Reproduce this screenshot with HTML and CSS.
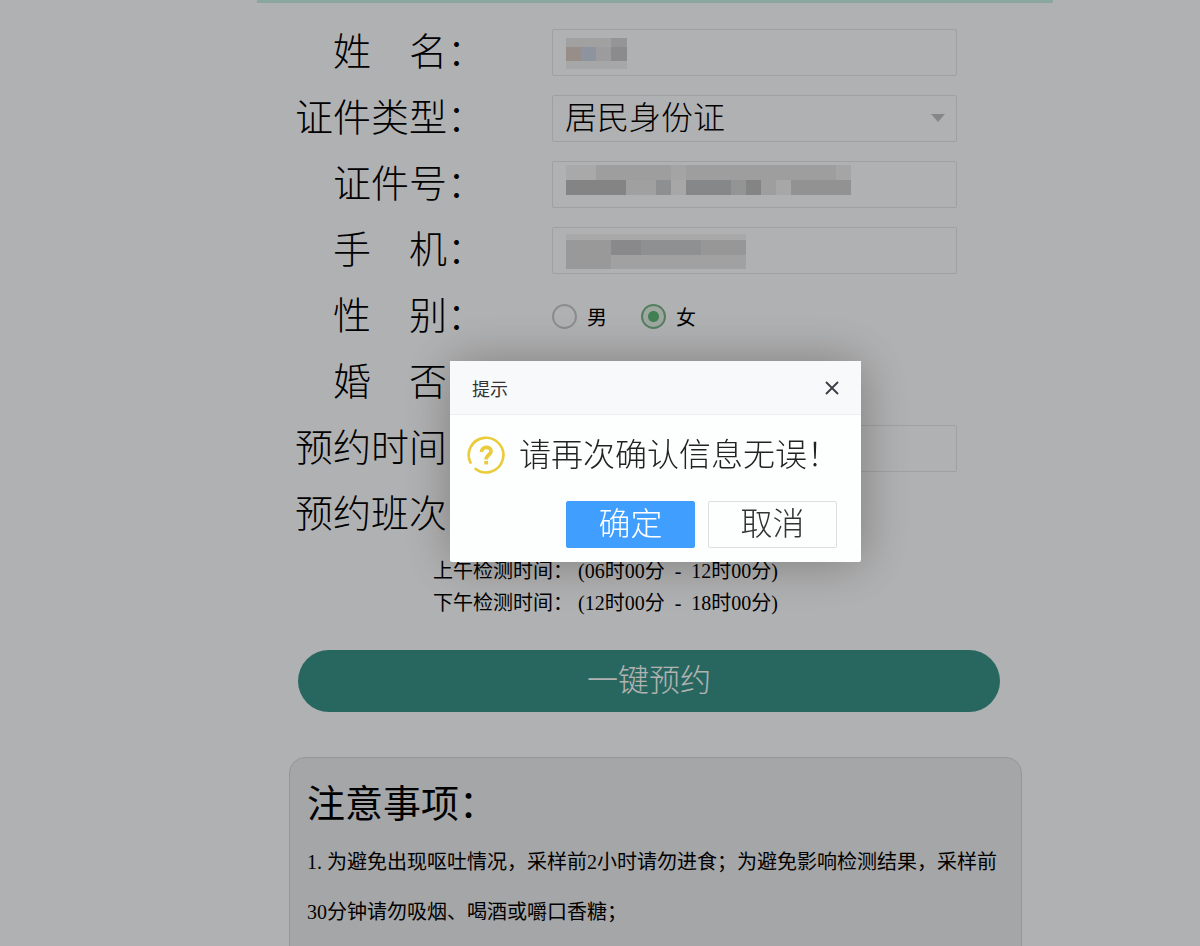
FILE: index.html
```
<!DOCTYPE html>
<html lang="zh-CN">
	<head>
		<meta charset="utf-8">
		<title>预约</title>
		<meta name="viewport" content="width=device-width,initial-scale=1" />
		<link rel="stylesheet" href="styles.css">
	</head>
	<body>
		<div class="page">
			<form class="form">
				<div class="row">
					<label class="name" for="userName">姓　名：</label>
					<input class="text mosaic-name" type="text" id="userName">
				</div>
				<div class="row">
					<label class="name" for="cardType">证件类型：</label>
					<div class="select">
						<select class="text" id="cardType">
							<option>居民身份证</option>
						</select>
					</div>
				</div>
				<div class="row">
					<label class="name" for="cardNo">证件号：</label>
					<input class="text mosaic-card" type="text" id="cardNo">
				</div>
				<div class="row">
					<label class="name" for="phone">手　机：</label>
					<input class="text mosaic-phone" type="text" id="phone">
				</div>
				<div class="row">
					<span class="name">性　别：</span>
					<div class="radios">
						<label><input type="radio" name="sex" value="1">男</label>
						<label><input type="radio" name="sex" value="2" checked>女</label>
					</div>
				</div>
				<div class="row">
					<span class="name">婚　否：</span>
				</div>
				<div class="row">
					<label class="name" for="date">预约时间：</label>
					<input class="text" type="text" id="date">
				</div>
				<div class="row">
					<span class="name">预约班次：</span>
				</div>
				<div class="times">
					<p>上午检测时间：&nbsp;(06时00分 &nbsp;-&nbsp; 12时00分)</p>
					<p>下午检测时间：&nbsp;(12时00分 &nbsp;-&nbsp; 18时00分)</p>
				</div>
				<button class="submit" type="button">一键预约</button>
			</form>
			<div class="notice">
				<h2>注意事项：</h2>
				<p>1. 为避免出现呕吐情况，采样前2小时请勿进食；为避免影响检测结果，采样前30分钟请勿吸烟、喝酒或嚼口香糖；</p>
			</div>
		</div>

		<!-- 提示弹窗 -->
		<div class="mask">
			<div class="dialog" role="dialog" aria-labelledby="dialogTitle">
				<div class="head">
					<span id="dialogTitle">提示</span>
					<button class="close" type="button" aria-label="关闭">
						<svg width="14" height="14" viewBox="0 0 14 14"><path d="M1 1L13 13M13 1L1 13" stroke="#3c3b42" stroke-width="1.8" fill="none"/></svg>
					</button>
				</div>
				<div class="message">
					<svg width="38" height="38" viewBox="0 0 38 38" fill="none">
						<path d="M7.8 32.2A17.3 17.3 0 1 0 4 27.6" stroke="#eacb3c" stroke-width="2.6"/>
						<path d="M14.5 16C14.5 10 24 10 24 15.300C24 19 19.200 18.500 19.200 23.500" stroke="#eacb3c" stroke-width="3.800"/>
						<rect x="17.300" y="25" width="3.800" height="3.400" fill="#eacb3c"/>
					</svg>
					<span>请再次确认信息无误！</span>
				</div>
				<div class="btns">
					<button class="ok" type="button">确定</button>
					<button type="button">取消</button>
				</div>
			</div>
		</div>
	</body>
</html>
```
FILE: styles.css
```
html,body,p,h2{margin: 0; padding: 0;}
*{box-sizing: border-box;}
body{
	height: 100vh;
	overflow: hidden;
	padding: 0 147px 0 257px;
	background: #fdfeff;
	color: #000;
	font-family: "Liberation Serif", "Noto Sans CJK SC", serif;
	font-size: 20px;
}
input,select,button{
	font: inherit;
	color: inherit;
	margin: 0;
}
.page{
	border-top: 3px solid #c5efe3;
}
.form{
	padding-top: 16px;
}
.row{
	display: flex;
	align-items: center;
	gap: 67px;
	height: 66px;
	padding-right: 96px;
}
.name{
	width: 228px;
	text-align: right;
	font-size: 38px;
	font-weight: 300;
	line-height: 66px;
	white-space: nowrap;
}
.text{
	flex: 1;
	width: 100%;
	min-width: 0;
	height: 47px;
	padding: 0 12px;
	border: 1px solid #e6e6e6;
	border-radius: 2px;
	background-color: transparent;
	background-repeat: no-repeat;
	font-size: 32px;
	font-weight: 300;
	line-height: 45px;
}
.select{
	flex: 1;
	position: relative;
}
.select select{
	display: block;
	appearance: none;
}
.select::after{
	content: "";
	position: absolute;
	right: 12px;
	top: 19px;
	border: 7px solid transparent;
	border-top: 8px solid #c2c2c2;
	border-bottom: 0;
}
/* 打码 */
.mosaic-name{
	background-image:
		linear-gradient(90deg, #e7e7e7 45px, #d6d6d8 45px),
		linear-gradient(90deg, #d9ccc6 15px, #cbd5e6 15px 30px, #e0e0e2 30px 45px, #c7c8cb 45px),
		linear-gradient(#f0f0f0, #f0f0f0);
	background-size: 61px 9px, 61px 14px, 61px 8px;
	background-position: 13px 8px, 13px 17px, 13px 31px;
}
.mosaic-card{
	background-image:
		linear-gradient(90deg, #f3f3f3 30px, #e3e3e4 30px 105px, #ebebec 105px 120px, #e3e3e4 120px 270px, #ececed 270px),
		linear-gradient(90deg, #bdbebf 60px, #e5e5e6 60px 90px, #cccdce 90px 105px, #f0f0f1 105px 120px, #c1c2c3 120px 165px, #d3d4d5 165px 180px, #bdbebf 180px 195px, #e3e3e4 195px 210px, #f0f0f1 210px 225px, #d1d2d3 225px);
	background-size: 285px 15px, 285px 15px;
	background-position: 13px 3px, 13px 18px;
}
.mosaic-phone{
	background-image:
		linear-gradient(#f3f3f4, #f3f3f4),
		linear-gradient(90deg, #dcdcdd 45px, #c4c5c7 45px 75px, #cdced1 75px 135px, #d8d8da 135px),
		linear-gradient(90deg, #dcdcdd 45px, #e7e7e8 45px);
	background-size: 180px 6px, 180px 15px, 180px 14px;
	background-position: 13px 6px, 13px 12px, 13px 27px;
}
.radios{
	display: flex;
	gap: 34px;
}
.radios label{
	display: flex;
	align-items: center;
	gap: 10px;
}
.radios input{
	appearance: none;
	width: 25px;
	height: 25px;
	border: 2px solid #c9c9c9;
	border-radius: 50%;
}
.radios input:checked{
	border-color: #7ab58b;
	background: radial-gradient(circle, #5fb878 5px, #e3f1e6 6px);
}
.times{
	margin-top: 8px;
	padding-left: 176px;
	line-height: 32px;
}
.submit{
	display: block;
	width: calc(100% - 94px);
	height: 62px;
	margin: 31px 53px 45px 41px;
	padding: 0 0 8px;
	border: 0;
	border-radius: 31px;
	background: #3a9489;
	color: #fff;
	font-size: 31px;
	font-weight: 300;
}
.notice{
	margin: 0 31px 0 32px;
	padding: 21px 17px 40px;
	border: 1px solid #d8d8d9;
	border-radius: 16px;
	background: #edeef0;
	line-height: 50px;
}
.notice h2{
	margin-bottom: 8px;
	font-size: 38px;
	font-weight: 400;
}
/* 弹窗 */
.mask{
	position: fixed;
	top: 0;
	left: 0;
	right: 0;
	bottom: 0;
	display: flex;
	justify-content: center;
	align-items: center;
	padding: 0 0 23px 111px;
	background: rgba(0,0,0,.3);
}
.dialog{
	width: 411px;
	border-radius: 2px;
	background: #fdfffe;
	box-shadow: 1px 1px 50px rgba(0,0,0,.3);
}
.head{
	display: flex;
	justify-content: space-between;
	align-items: center;
	height: 54px;
	padding: 0 22px;
	border-bottom: 1px solid #eee;
	background: #f8f9fb;
	color: #333;
	font-size: 18px;
}
.close{
	display: flex;
	padding: 0;
	border: 0;
	background: none;
}
.message{
	display: flex;
	align-items: center;
	gap: 14px;
	height: 86px;
	padding: 0 0 6px 17px;
	color: #222;
	font-size: 32px;
	font-weight: 300;
	line-height: 48px;
	white-space: nowrap;
}
.btns{
	display: flex;
	justify-content: flex-end;
	gap: 13px;
	padding: 0 24px 14px;
}
.btns button{
	width: 129px;
	height: 47px;
	padding: 0;
	border: 1px solid #dedede;
	border-radius: 2px;
	background: #fdfffe;
	color: #333;
	font-size: 32px;
	font-weight: 300;
	line-height: 45px;
}
.btns .ok{
	border-color: #409eff;
	background: #409eff;
	color: #fff;
}
```
